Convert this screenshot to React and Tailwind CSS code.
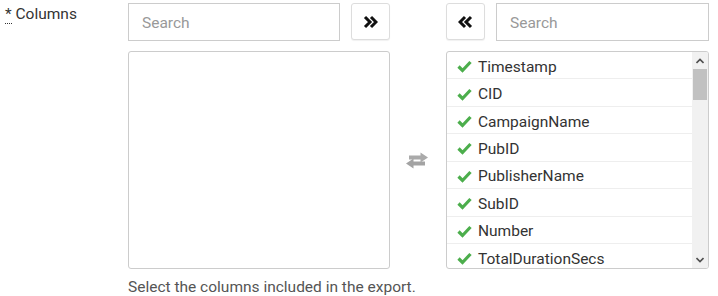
import React from "react";

const items = [
  "Timestamp",
  "CID",
  "CampaignName",
  "PubID",
  "PublisherName",
  "SubID",
  "Number",
  "TotalDurationSecs",
];

function DoubleChevron({ dir }) {
  const d =
    dir === "right"
      ? "M2 2 L7 7 L2 12 M8 2 L13 7 L8 12"
      : "M7 2 L2 7 L7 12 M13 2 L8 7 L13 12";
  return (
    <svg width="15" height="14" viewBox="0 0 15 14">
      <path d={d} fill="none" stroke="#111" strokeWidth="3" strokeLinejoin="miter" />
    </svg>
  );
}

function Check() {
  return (
    <svg width="15" height="13" viewBox="0 0 15 13">
      <path d="M1.5 6.5 L5.5 10.5 L13.5 2" fill="none" stroke="#4cae4c" strokeWidth="3.2" />
    </svg>
  );
}

function Swap() {
  return (
    <svg width="24" height="17" viewBox="0 0 24 17">
      <path d="M4 3.5 H15.5 V0.5 L23 5.5 L15.5 10.5 V7.5 H4 Z" fill="#aaa" />
      <path d="M20 9.5 H8.5 V6.5 L1 11.5 L8.5 16.5 V13.5 H20 Z" fill="#a3a3a3" />
    </svg>
  );
}

export default function App() {
  return (
    <div className="w-[718px] h-[296px] bg-white text-[#333] text-[15.5px] leading-[20px] flex" style={{ fontFamily: "Roboto, 'Liberation Sans', sans-serif" }}>
      <div className="w-[128px] pl-[5px] pt-[4px]">
        <span className="border-b border-dotted border-[#333]">*</span> Columns
      </div>
      <div className="flex flex-col pt-[3px]">
        <div className="flex">
          <div className="w-[262px] flex gap-[11px]">
            <input
              placeholder="Search"
              className="w-[212px] h-[38px] border border-[#ccc] px-[13px] pt-[1px] text-[15.5px] placeholder:text-[#999] outline-none"
            />
            <button className="w-[39px] h-[37px] border border-[#ddd] rounded-[3px] flex items-center justify-center bg-white shadow-[0_1px_1px_rgba(0,0,0,0.06)]">
              <DoubleChevron dir="right" />
            </button>
          </div>
          <div className="w-[56px]" />
          <div className="w-[263px] flex gap-[11px]">
            <button className="w-[39px] h-[37px] border border-[#ddd] rounded-[3px] flex items-center justify-center bg-white shadow-[0_1px_1px_rgba(0,0,0,0.06)]">
              <DoubleChevron dir="left" />
            </button>
            <input
              placeholder="Search"
              className="w-[213px] h-[38px] border border-[#ccc] px-[13px] pt-[1px] text-[15.5px] placeholder:text-[#999] outline-none"
            />
          </div>
        </div>
        <div className="flex mt-[10px]">
          <div className="w-[262px] h-[218px] border border-[#ccc] rounded-[3px]" />
          <div className="w-[56px] flex items-center justify-center pr-[2px]">
            <Swap />
          </div>
          <div className="w-[263px] h-[218px] border border-[#ccc] rounded-[3px] flex overflow-hidden">
            <div className="flex-1 flex flex-col">
              {items.map((it) => (
                <div key={it} className="h-[27.43px] shrink-0 border-b border-[#eee] flex items-center pl-[10px] gap-[6px] pt-[3px]">
                  <Check />
                  <span>{it}</span>
                </div>
              ))}
            </div>
            <div className="w-[16px] bg-[#f1f1f1] flex flex-col items-center">
              <div className="h-[17px] flex items-center justify-center">
                <svg width="8" height="6" viewBox="0 0 8 6"><path d="M0.5 5 L4 1.5 L7.5 5" fill="none" stroke="#505050" strokeWidth="1.6" /></svg>
              </div>
              <div className="w-[14px] h-[31px] bg-[#c1c1c1]" />
              <div className="flex-1" />
              <div className="h-[17px] flex items-center justify-center">
                <svg width="8" height="6" viewBox="0 0 8 6"><path d="M0.5 1 L4 4.5 L7.5 1" fill="none" stroke="#505050" strokeWidth="1.6" /></svg>
              </div>
            </div>
          </div>
        </div>
        <div className="mt-[8px] text-[#555]">Select the columns included in the export.</div>
      </div>
    </div>
  );
}
